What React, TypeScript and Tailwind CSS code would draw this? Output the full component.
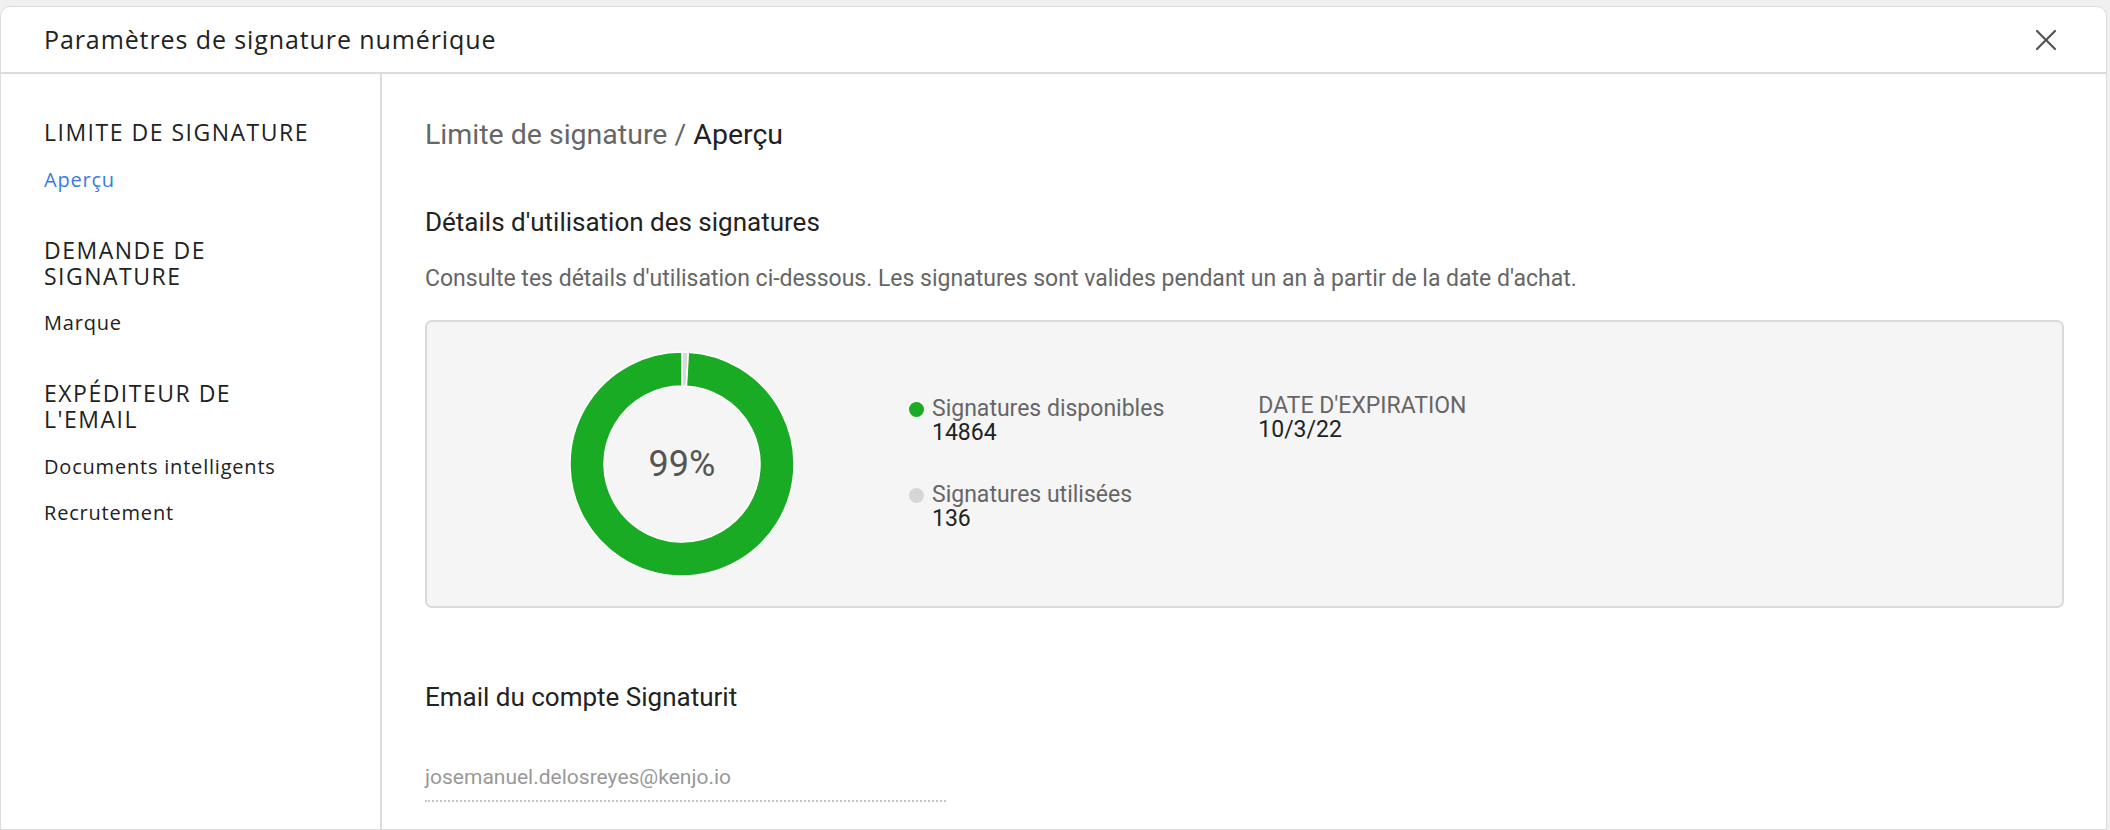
import React from "react"

const sans = "font-['Open_Sans',sans-serif]"
const narrow = "font-['Roboto',sans-serif]"

function sector(cx: number, cy: number, R: number, r: number, a0: number, a1: number) {
  const rad = (a: number) => (a * Math.PI) / 180
  const pt = (rr: number, a: number) => `${cx + rr * Math.sin(rad(a))} ${cy - rr * Math.cos(rad(a))}`
  const large = a1 - a0 > 180 ? 1 : 0
  return `M ${pt(R, a0)} A ${R} ${R} 0 ${large} 1 ${pt(R, a1)} L ${pt(r, a1)} A ${r} ${r} 0 ${large} 0 ${pt(r, a0)} Z`
}

function Donut() {
  const used = 136
  const total = 15000
  const cut = (used / total) * 360
  return (
    <div className="relative w-[226px] h-[226px]">
      <svg width="226" height="226" viewBox="0 0 226 226">
        <path d={sector(113, 113, 112, 78, 0, cut)} fill="#d9d9d9" stroke="#fff" strokeWidth="1.5" />
        <path d={sector(113, 113, 112, 78, cut, 360)} fill="#19ab24" stroke="#fff" strokeWidth="1.5" />
      </svg>
      <div className={`absolute inset-0 flex items-center justify-center text-[36px] text-[#555] ${narrow}`}>99%</div>
    </div>
  )
}

function LegendItem({ color, label, value }: { color: string; label: string; value: string }) {
  return (
    <div className="flex items-start gap-[8px]">
      <span className={`mt-[5px] w-[15px] h-[15px] rounded-full ${color}`}></span>
      <div className={`${narrow} text-[23px] leading-[24px]`}>
        <div className="text-[#666]">{label}</div>
        <div className="text-[#222]">{value}</div>
      </div>
    </div>
  )
}

export default function App() {
  return (
    <div className="w-[2110px] h-[830px] bg-[#f0f0f0] pt-[6px] overflow-hidden">
      <div className="h-full mr-[3px] bg-white rounded-t-[10px] border border-[#dcdcdc] flex flex-col">
        {/* header */}
        <div className="h-[67px] shrink-0 flex items-center justify-between pl-[43px] pr-[49px] border-b-2 border-[#dcdcdc]">
          <h1 className={`${sans} text-[25px] tracking-[0.9px] text-[#222]`}>Paramètres de signature numérique</h1>
          <svg width="22" height="22" viewBox="0 0 22 22" stroke="#555" strokeWidth="2.2" strokeLinecap="round">
            <line x1="2" y1="2" x2="20" y2="20" />
            <line x1="20" y1="2" x2="2" y2="20" />
          </svg>
        </div>

        <div className="flex flex-1">
          {/* sidebar */}
          <aside className={`w-[381px] shrink-0 border-r-2 border-[#dcdcdc] pl-[43px] pt-[45px] ${sans}`}>
            <div className="w-[272px] text-[23px] leading-[26px] tracking-[1.5px] text-[#222] uppercase">Limite de signature</div>
            <div className="mt-[22px] text-[20px] leading-[26px] tracking-[0.8px] text-[#3b7be0]">Aperçu</div>
            <div className="mt-[44px] w-[272px] text-[23px] leading-[26px] tracking-[1.5px] text-[#222] uppercase">Demande de signature</div>
            <div className="mt-[21px] text-[20px] leading-[26px] tracking-[0.8px] text-[#222]">Marque</div>
            <div className="mt-[44px] w-[272px] text-[23px] leading-[26px] tracking-[1.5px] text-[#222] uppercase">Expéditeur de l'email</div>
            <div className="mt-[22px] text-[20px] leading-[26px] tracking-[0.8px] text-[#222]">Documents intelligents</div>
            <div className="mt-[20px] text-[20px] leading-[26px] tracking-[0.8px] text-[#222]">Recrutement</div>
          </aside>

          {/* main */}
          <main className={`flex-1 pl-[43px] pr-[42px] pt-[44px] ${narrow}`}>
            <div className="text-[28.5px] leading-[34px] text-[#666]">
              Limite de signature / <span className="text-[#222]">Aperçu</span>
            </div>
            <div className="mt-[54px] text-[26px] leading-[32px] text-[#222]">Détails d'utilisation des signatures</div>
            <p className="mt-[27px] text-[23px] leading-[28px] text-[#666]">
              Consulte tes détails d'utilisation ci-dessous. Les signatures sont valides pendant un an à partir de la date d'achat.
            </p>

            <div className="mt-[27px] h-[288px] rounded-[7px] border-2 border-[#dadada] bg-[#f5f5f5] flex items-center pl-[142px]">
              <Donut />
              <div className="ml-[114px] flex flex-col gap-[38px]">
                <LegendItem color="bg-[#19ab24]" label="Signatures disponibles" value="14864" />
                <LegendItem color="bg-[#d6d6d6]" label="Signatures utilisées" value="136" />
              </div>
              <div className="self-start mt-[72px] ml-[94px] text-[23px] leading-[24px]">
                <div className="text-[#666] uppercase">Date d'expiration</div>
                <div className="text-[#222]">10/3/22</div>
              </div>
            </div>

            <div className="mt-[73px] text-[26px] leading-[32px] text-[#222]">Email du compte Signaturit</div>
            <div className="mt-[51px] w-[521px] border-b-2 border-dotted border-[#c4c4c4] pb-[10px] text-[21px] leading-[26px] text-[#999]">
              josemanuel.delosreyes@kenjo.io
            </div>
          </main>
        </div>
      </div>
    </div>
  )
}
